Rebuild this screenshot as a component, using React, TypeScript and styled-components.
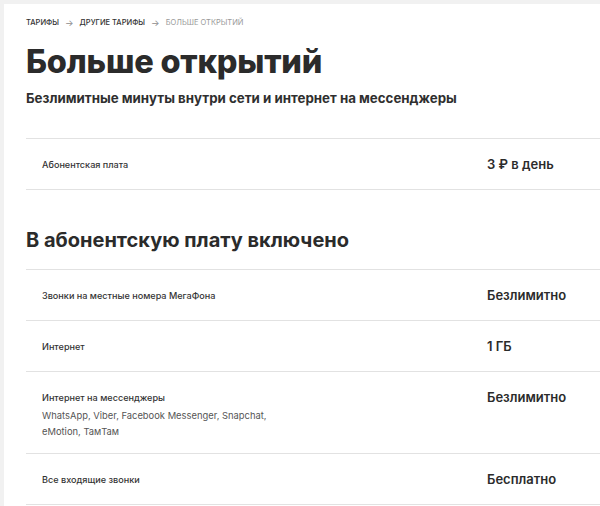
import styled, { createGlobalStyle } from 'styled-components';

const GlobalStyle = createGlobalStyle`
  body {
    margin: 0;
    background: #f1f1f1;
    font-family: Inter, "Noto Sans", sans-serif;
    color: #333333;
  }
`;

type Row = {
  label: string;
  note?: string[];
  value: string;
};

const included: Row[] = [
  { label: 'Звонки на местные номера МегаФона', value: 'Безлимитно' },
  { label: 'Интернет', value: '1 ГБ' },
  {
    label: 'Интернет на мессенджеры',
    note: ['WhatsApp, Viber, Facebook Messenger, Snapchat,', 'eMotion, ТамТам'],
    value: 'Безлимитно',
  },
  { label: 'Все входящие звонки', value: 'Бесплатно' },
];

export default function App() {
  return (
    <>
      <GlobalStyle />
      <Page>
        <Breadcrumbs>
          <Crumb>Тарифы</Crumb>
          <Arrow>→</Arrow>
          <Crumb>Другие тарифы</Crumb>
          <Arrow>→</Arrow>
          <Crumb $current>Больше открытий</Crumb>
        </Breadcrumbs>
        <Title>Больше открытий</Title>
        <Subtitle>Безлимитные минуты внутри сети и интернет на мессенджеры</Subtitle>

        <Table $first>
          <TableRow>
            <Label>Абонентская плата</Label>
            <Value>3 ₽ в день</Value>
          </TableRow>
        </Table>

        <SectionTitle>В абонентскую плату включено</SectionTitle>
        <Table>
          {included.map((row) => (
            <TableRow key={row.label}>
              <div>
                <Label>{row.label}</Label>
                {row.note && (
                  <Note>
                    {row.note.map((line) => (
                      <div key={line}>{line}</div>
                    ))}
                  </Note>
                )}
              </div>
              <Value>{row.value}</Value>
            </TableRow>
          ))}
        </Table>
      </Page>
    </>
  );
}

const Page = styled.div`
  margin: 4px 0 0 4px;
  min-height: 502px;
  background: #ffffff;
  padding: 13px 0 0 22px;
  box-sizing: border-box;
`;

const Breadcrumbs = styled.div`
  display: flex;
  align-items: center;
  column-gap: 6px;
  font-size: 7.5px;
  line-height: 12px;
  text-transform: uppercase;
`;

const Crumb = styled.span<{ $current?: boolean }>`
  color: ${(props) => (props.$current ? '#9a9a9a' : '#333333')};
  font-weight: ${(props) => (props.$current ? 400 : 500)};
`;

const Arrow = styled.span`
  color: #8c8c8c;
  font-size: 9px;
`;

const Title = styled.h1`
  margin: 15px 0 0;
  font-size: 32.5px;
  line-height: 36px;
  font-weight: 800;
  color: #2b2b2b;
  letter-spacing: -0.2px;
`;

const Subtitle = styled.div`
  margin-top: 9px;
  font-size: 13.3px;
  line-height: 18px;
  font-weight: 700;
  color: #2f2f2f;
`;

const Table = styled.div<{ $first?: boolean }>`
  margin-top: ${(props) => (props.$first ? '31px' : '0')};
  border-top: 1px solid #e2e2e2;
`;

const TableRow = styled.div`
  display: grid;
  grid-template-columns: 1fr 113px;
  align-items: start;
  padding: 19px 0 18px 16px;
  border-bottom: 1px solid #e2e2e2;
`;

const Label = styled.div`
  font-size: 9.1px;
  line-height: 13px;
  font-weight: 500;
  color: #333333;
`;

const Note = styled.div`
  margin: 4px 0 -5px;
  font-size: 9.4px;
  line-height: 16px;
  color: #555555;
`;

const Value = styled.div`
  font-size: 13px;
  line-height: 13px;
  font-weight: 600;
  color: #2b2b2b;
`;

const SectionTitle = styled.h2`
  margin: 38px 0 17px;
  font-size: 20px;
  line-height: 24px;
  font-weight: 700;
  color: #2b2b2b;
`;
